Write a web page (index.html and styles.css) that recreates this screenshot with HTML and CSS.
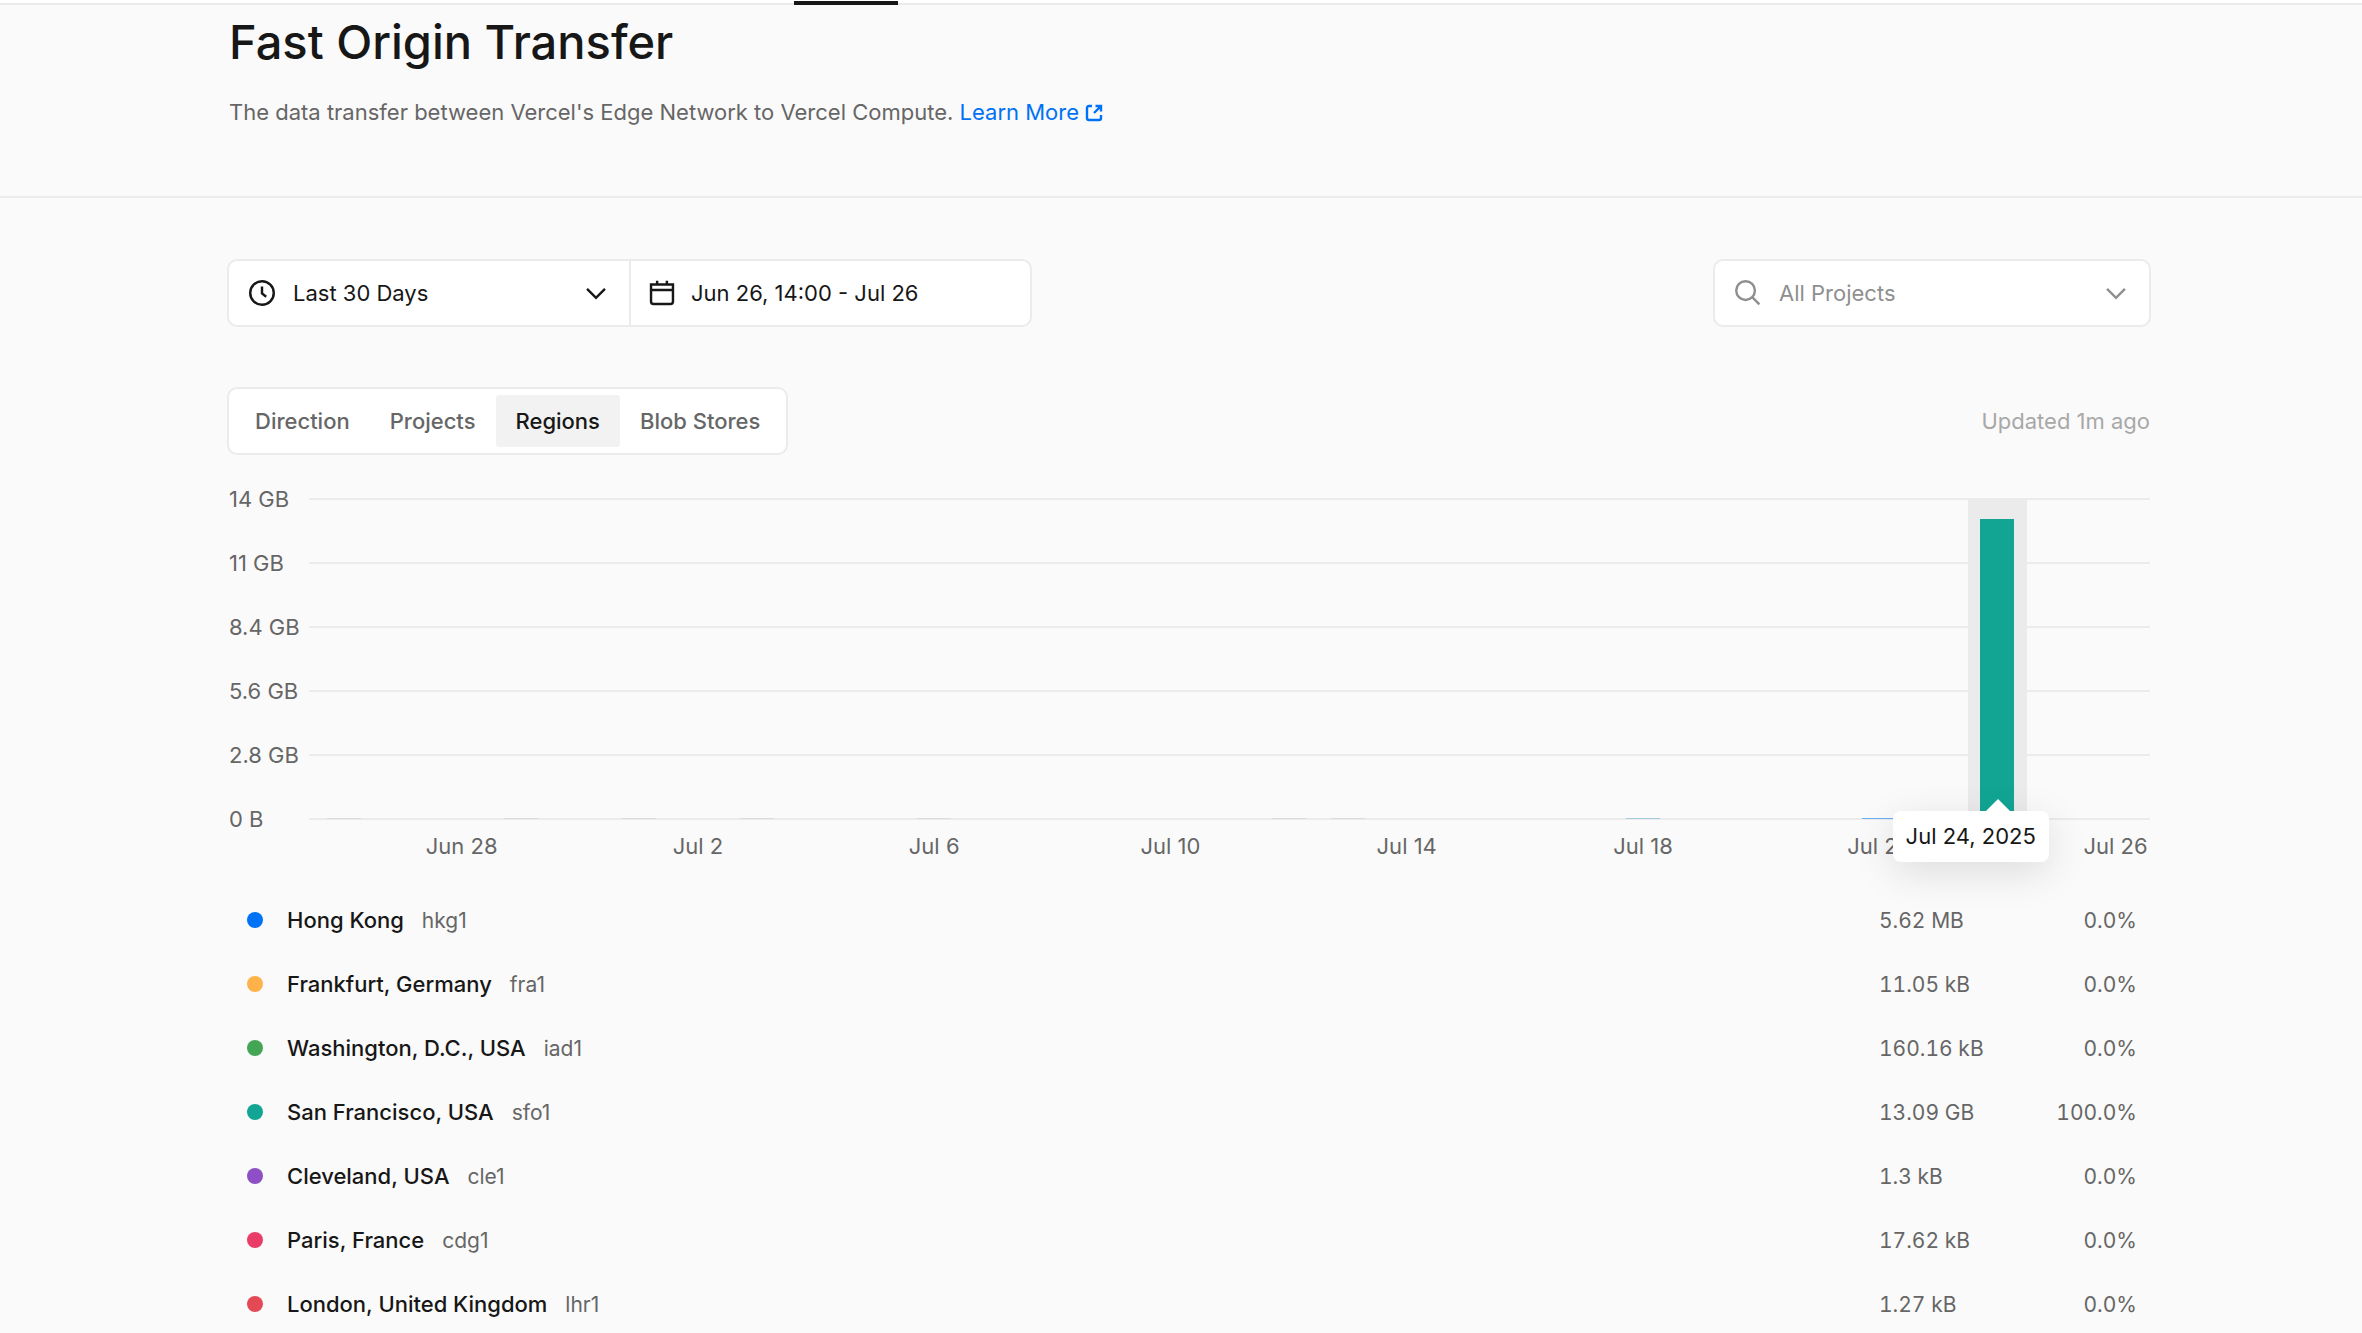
FILE: index.html
```html
<!DOCTYPE html>
<html lang="en">
<head>
<meta charset="utf-8">
<meta name="viewport" content="width=device-width, initial-scale=1">
<title>Fast Origin Transfer</title>
<link rel="stylesheet" href="styles.css">
</head>
<body>
<div class="nav-strip"><span class="nav-indicator"></span></div>

<header class="page-header">
  <h1 class="page-title">Fast Origin Transfer</h1>
  <p class="page-description">The data transfer between Vercel's Edge Network to Vercel Compute.
    <a class="learn-more" href="#">Learn More
      <svg class="link-icon" viewBox="0 0 18 18" aria-hidden="true"><path d="M7 2H4Q2 2 2 4V14Q2 16 4 16H14Q16 16 16 14V11M10.500 2H16V7.500M16 2L9 9"/></svg></a>
  </p>
</header>

<main class="page-main">
  <div class="filters">
    <div class="range">
      <label class="field field-range">
        <svg class="icon" viewBox="0 0 16 16" aria-hidden="true"><circle cx="8" cy="8" r="7.250"/><path d="M8 4v4.300l2.600 2"/></svg>
        <select class="control" aria-label="Last 30 Days"><option>Last 30 Days</option></select>
        <svg class="icon chevron" viewBox="0 0 16 16" aria-hidden="true"><path d="M2.500 5.500L8 11l5.500-5.500"/></svg>
      </label>
      <button class="field field-dates" type="button">
        <svg class="icon" viewBox="0 0 16 16" aria-hidden="true"><path d="M1.250 2.750h13.500v10.500q0 1.500-1.500 1.500H2.750q-1.500 0-1.500-1.500zM1.250 6.200h13.500M5 .5v2M11 .5v2"/></svg>
        <span>Jun 26, 14:00 - Jul 26</span>
      </button>
    </div>
    <label class="field field-projects">
      <svg class="icon" viewBox="0 0 16 16" aria-hidden="true"><circle cx="6.500" cy="6.500" r="5.750"/><path d="M10.600 10.600L15 15"/></svg>
      <input class="control" type="text" placeholder="All Projects" aria-label="All Projects">
      <svg class="icon chevron" viewBox="0 0 16 16" aria-hidden="true"><path d="M2.500 5.500L8 11l5.500-5.500"/></svg>
    </label>
  </div>

  <div class="view-bar">
    <div class="tabs">
      <button class="tab" type="button">Direction</button>
      <button class="tab" type="button">Projects</button>
      <button class="tab tab-active" type="button">Regions</button>
      <button class="tab" type="button">Blob Stores</button>
    </div>
    <span class="updated">Updated 1m ago</span>
  </div>

  <section class="chart">
    <div class="y-axis">
      <span>14 GB</span><span>11 GB</span><span>8.4 GB</span><span>5.6 GB</span><span>2.8 GB</span><span>0 B</span>
    </div>
    <div class="plot">
      <div class="gridlines"><i></i><i></i><i></i><i></i><i></i></div>
      <div class="days">
        <div class="day"><i class="bar bar-gray"></i></div>
        <div class="day"></div>
        <div class="day"></div>
        <div class="day"><i class="bar bar-gray"></i></div>
        <div class="day"></div>
        <div class="day"><i class="bar bar-gray"></i></div>
        <div class="day"></div>
        <div class="day"><i class="bar bar-gray"></i></div>
        <div class="day"></div>
        <div class="day"></div>
        <div class="day"><i class="bar bar-gray"></i></div>
        <div class="day"></div>
        <div class="day"></div>
        <div class="day"></div>
        <div class="day"></div>
        <div class="day"></div>
        <div class="day"><i class="bar bar-gray"></i></div>
        <div class="day"><i class="bar bar-gray"></i></div>
        <div class="day"></div>
        <div class="day"></div>
        <div class="day"></div>
        <div class="day"></div>
        <div class="day"><i class="bar bar-mixed"></i></div>
        <div class="day"></div>
        <div class="day"></div>
        <div class="day"></div>
        <div class="day"><i class="bar bar-blue"></i></div>
        <div class="day"></div>
        <div class="day day-active"><i class="bar bar-teal" style="height:93.5%"></i><div class="tooltip">Jul 24, 2025</div></div>
        <div class="day"></div>
        <div class="day"></div>
      </div>
    </div>
    <div class="x-axis">
      <span class="d3">Jun 28</span><span class="d7">Jul 2</span><span class="d11">Jul 6</span><span class="d15">Jul 10</span><span class="d19">Jul 14</span><span class="d23">Jul 18</span><span class="d27">Jul 22</span><span class="d31">Jul 26</span>
    </div>
  </section>

  <table class="regions">
    <tbody>
      <tr><th scope="row"><i class="dot blue"></i>Hong Kong<span class="code">hkg1</span></th><td class="size">5.62 MB</td><td class="share">0.0%</td></tr>
      <tr><th scope="row"><i class="dot orange"></i>Frankfurt, Germany<span class="code">fra1</span></th><td class="size">11.05 kB</td><td class="share">0.0%</td></tr>
      <tr><th scope="row"><i class="dot green"></i>Washington, D.C., USA<span class="code">iad1</span></th><td class="size">160.16 kB</td><td class="share">0.0%</td></tr>
      <tr><th scope="row"><i class="dot teal"></i>San Francisco, USA<span class="code">sfo1</span></th><td class="size">13.09 GB</td><td class="share">100.0%</td></tr>
      <tr><th scope="row"><i class="dot purple"></i>Cleveland, USA<span class="code">cle1</span></th><td class="size">1.3 kB</td><td class="share">0.0%</td></tr>
      <tr><th scope="row"><i class="dot pink"></i>Paris, France<span class="code">cdg1</span></th><td class="size">17.62 kB</td><td class="share">0.0%</td></tr>
      <tr><th scope="row"><i class="dot red"></i>London, United Kingdom<span class="code">lhr1</span></th><td class="size">1.27 kB</td><td class="share">0.0%</td></tr>
    </tbody>
  </table>
</main>
</body>
</html>
```
FILE: styles.css
```css
* { box-sizing: border-box; }

body {
  margin: 0;
  background: #fafafa;
  color: #171717;
  font: 400 22px/32px Inter, "Liberation Sans", sans-serif;
}

button, input, select { font: inherit; color: inherit; }

.nav-strip {
  display: flex;
  height: 5px;
  padding: 1px 0 0 794px;
  background: linear-gradient(#fff 3px, #ebebeb 3px);
}
.nav-indicator { width: 104px; background: #171717; }

.page-header {
  padding: 5px 212px 68px 229px;
  border-bottom: 2px solid #ebebeb;
}
.page-title { margin: 0 0 22px; font-size: 47px; line-height: 64px; font-weight: 500; }
.page-description { margin: 0; color: #666; }
.learn-more { color: #0072f5; text-decoration: none; }
.link-icon { width: 18px; height: 18px; fill: none; stroke: currentColor; stroke-width: 2.4; vertical-align: -2px; }

.page-main { padding: 61px 211px 0 227px; }

.filters { display: flex; justify-content: space-between; }
.range { display: flex; width: 805px; }
.field {
  display: flex;
  align-items: center;
  height: 68px;
  padding: 0 20px;
  border: 2px solid #ebebeb;
  background: #fff;
  text-align: left;
}
.field-range { width: 402px; border-right: 0; border-radius: 10px 0 0 10px; }
.field-dates { flex: 1; gap: 16px; padding: 0 18px; border-radius: 0 10px 10px 0; }
.field-projects { width: 438px; border-radius: 10px; color: #8f8f8f; }
.icon { flex: none; width: 26px; height: 26px; fill: none; stroke: currentColor; stroke-width: 1.5; }
.control {
  flex: 1;
  min-width: 0;
  padding: 0 0 0 18px;
  border: 0;
  outline: 0;
  background: none;
  appearance: none;
}
.control::placeholder { color: #8f8f8f; opacity: 1; }

.view-bar { display: flex; align-items: center; justify-content: space-between; margin-top: 60px; padding-right: 1px; }
.tabs { display: flex; height: 68px; padding: 6px; border: 2px solid #ebebeb; border-radius: 10px; background: #fff; }
.tab { padding: 0 20px; border: 0; border-radius: 3px; background: none; color: #666; font-weight: 500; }
.tab-active { background: #f2f2f2; color: #171717; }
.updated { color: #a8a8a8; }

.chart {
  display: grid;
  grid-template-columns: 82px minmax(0, 1fr);
  margin-top: 43px;
  padding-right: 1px;
  color: #666;
}
.y-axis { display: flex; flex-direction: column; justify-content: space-between; height: 322px; }
.y-axis span { height: 2px; padding-left: 2px; line-height: 2px; }
.plot { display: grid; height: 322px; }
.gridlines, .days { grid-area: 1 / 1; }
.gridlines { display: grid; grid-template-rows: repeat(5, 1fr); border-bottom: 2px solid #ebebeb; }
.gridlines i { border-top: 2px solid #ebebeb; }
.days, .x-axis { display: grid; grid-template-columns: repeat(31, minmax(0, 1fr)); padding: 0 5px; }
.days { padding-bottom: 1px; }
.day { display: flex; align-items: flex-end; justify-content: center; }
.day-active { position: relative; background: #ebebeb; }
.bar { width: 34px; height: 1px; }
.bar-gray { background: #dcdcdc; }
.bar-mixed { background: #a4cddb; }
.bar-blue { background: #6cb0f8; }
.bar-teal { background: #12a594; }
.tooltip {
  position: absolute;
  right: -22px;
  bottom: -43px;
  padding: 9px 13px 10px;
  border-radius: 8px;
  background: #fff;
  color: #171717;
  white-space: nowrap;
  box-shadow: 0 10px 40px rgba(0, 0, 0, .12);
}
.tooltip::before {
  content: "";
  position: absolute;
  right: 39px;
  bottom: 100%;
  border: 12px solid transparent;
  border-top: 0;
  border-bottom-color: #fff;
}
.x-axis { grid-column: 2; margin-top: 10px; }
.x-axis span { grid-row: 1; justify-self: center; white-space: nowrap; }
.d3 { grid-column: 3; }
.d7 { grid-column: 7; }
.d11 { grid-column: 11; }
.d15 { grid-column: 15; }
.d19 { grid-column: 19; }
.d23 { grid-column: 23; }
.d27 { grid-column: 27; }
.d31 { grid-column: 31; }

.regions { width: 100%; margin-top: 26px; border-collapse: collapse; }
.regions tr { height: 64px; }
.regions th, .regions td { padding: 0; }
.regions th { padding-left: 20px; text-align: left; font-weight: 500; }
.regions td { padding-top: 2px; color: #666; font-size: 21px; font-variant-numeric: tabular-nums; }
.code { margin-left: 18px; color: #666; font-size: 21px; font-weight: 400; }
.size { width: 145px; }
.regions .share { width: 127px; padding-right: 14px; text-align: right; }
.dot { display: inline-block; width: 16px; height: 16px; margin-right: 24px; border-radius: 50%; }
.blue { background: #0072f5; }
.orange { background: #ffb24a; }
.green { background: #45a557; }
.teal { background: #12a594; }
.purple { background: #8e4ec6; }
.pink { background: #e93d67; }
.red { background: #e34a55; }
```
